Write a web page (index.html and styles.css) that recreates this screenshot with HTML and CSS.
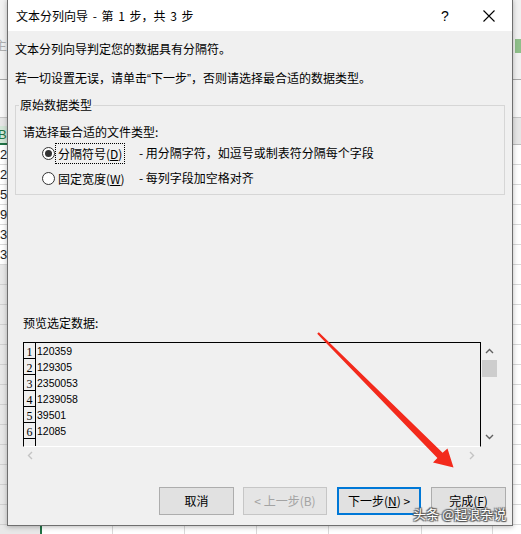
FILE: index.html
```html
<!DOCTYPE html>
<html lang="zh-CN">
<head>
<meta charset="utf-8">
<title>文本分列向导</title>
<link rel="stylesheet" href="styles.css">
</head>
<body>
<div class="desk">
  <div class="sheet">
    <div class="ribbon">
      <span class="ribbon-text">主</span>
      <span class="ribbon-icon"></span>
    </div>
    <div class="fbar"></div>
    <div class="colhead"><span class="colsel">B</span></div>
    <div class="cells">
      <div class="col c0">
        <div class="cell">2</div>
        <div class="cell">2</div>
        <div class="cell">5</div>
        <div class="cell">90</div>
        <div class="cell">3</div>
        <div class="cell">35</div>
        <div class="fill"></div>
      </div>
      <div class="col w71"></div>
      <div class="col w72"></div>
      <div class="col w72"></div>
      <div class="col w72"></div>
      <div class="col w93"></div>
      <div class="col w71"></div>
      <div class="col rest"></div>
    </div>
  </div>

  <div class="dialog">
    <div class="titlebar">
      <span class="title">文本分列向导 - 第 1 步，共 3 步</span>
      <span class="tbtn help">?</span>
      <span class="tbtn close">
        <svg width="12" height="12" viewBox="0 0 12 12"><path d="M0.5 0.5 L11.5 11.5 M11.5 0.5 L0.5 11.5" stroke="#000" stroke-width="1.1" fill="none"/></svg>
      </span>
    </div>
    <div class="content">
      <p class="line first">文本分列向导判定您的数据具有分隔符。</p>
      <p class="line second">若一切设置无误，请单击<span class="q">“</span>下一步<span class="q">”</span>，否则请选择最合适的数据类型。</p>
      <fieldset class="group">
        <legend>原始数据类型</legend>
        <p class="line prompt">请选择最合适的文件类型:</p>
        <div class="radio-row r1">
          <span class="radio checked"></span>
          <span class="rlabel"><span class="focus">分隔符号(<u>D</u>)</span></span>
          <span class="rdesc">- 用分隔字符，如逗号或制表符分隔每个字段</span>
        </div>
        <div class="radio-row r2">
          <span class="radio"></span>
          <span class="rlabel"><span class="nofocus">固定宽度(<u>W</u>)</span></span>
          <span class="rdesc">- 每列字段加空格对齐</span>
        </div>
      </fieldset>
      <p class="line preview-label">预览选定数据:</p>
      <div class="preview">
        <div class="pbox">
          <div class="prow"><span class="pnum">1</span><span class="pval">120359</span></div>
          <div class="prow"><span class="pnum">2</span><span class="pval">129305</span></div>
          <div class="prow"><span class="pnum">3</span><span class="pval">2350053</span></div>
          <div class="prow"><span class="pnum">4</span><span class="pval">1239058</span></div>
          <div class="prow"><span class="pnum">5</span><span class="pval">39501</span></div>
          <div class="prow"><span class="pnum">6</span><span class="pval">12085</span></div>
          <div class="prow"><span class="pnum"></span><span class="pval"></span></div>
        </div>
        <div class="vscroll">
          <svg class="chev" width="9" height="6" viewBox="0 0 9 6"><path d="M1 5 L4.5 1.5 L8 5" stroke="#606060" stroke-width="1.4" fill="none"/></svg>
          <div class="thumb"></div>
          <div class="vspace"></div>
          <svg class="chev" width="9" height="6" viewBox="0 0 9 6"><path d="M1 1 L4.5 4.5 L8 1" stroke="#606060" stroke-width="1.4" fill="none"/></svg>
        </div>
        <div class="hscroll">
          <svg width="6" height="9" viewBox="0 0 6 9"><path d="M5 1 L1.5 4.5 L5 8" stroke="#c4c4c4" stroke-width="1.4" fill="none"/></svg>
          <svg width="6" height="9" viewBox="0 0 6 9"><path d="M1 1 L4.5 4.5 L1 8" stroke="#c4c4c4" stroke-width="1.4" fill="none"/></svg>
        </div>
        <div class="corner"></div>
      </div>
      <div class="buttons">
        <button class="btn b-cancel">取消</button>
        <button class="btn b-prev" disabled>&lt; 上一步(B)</button>
        <button class="btn b-next">下一步(<u>N</u>) &gt;</button>
        <button class="btn b-finish">完成(<u>F</u>)</button>
      </div>
    </div>
  </div>

  <svg class="arrow" width="521" height="534" viewBox="0 0 521 534">
    <polygon points="318.8,332.2 442.6,452.8 447.5,448.5 453.5,467.5 433,462.5 437.4,457.9 317.2,333.8" fill="#f32a1c"/>
  </svg>
  <div class="watermark">头条 @起浪杂说</div>
</div>
</body>
</html>
```

FILE: styles.css
```css
* { box-sizing: border-box; }
html, body { margin: 0; padding: 0; }
body {
  width: 521px;
  height: 534px;
  overflow: hidden;
  font-family: "Noto Sans CJK SC", "Microsoft YaHei", sans-serif;
  font-size: 12px;
  color: #000;
  background: #fff;
}
.desk { position: relative; width: 521px; height: 534px; overflow: hidden; }

/* background spreadsheet */
.sheet { display: flex; flex-direction: column; height: 100%; background: #fff; }
.ribbon {
  height: 80px;
  background: #f1f1f1;
  border-bottom: 1px solid #a8a8a8;
  display: flex;
  justify-content: space-between;
  align-items: flex-start;
  padding-top: 36px;
}
.ribbon-text { margin-left: -6px; color: #b0b0b0; font-size: 13px; line-height: 18px; }
.ribbon-icon { width: 6px; height: 14px; margin-top: 3px; background: #8fbf8a; }
.fbar { height: 38px; background: #f7f7f7; border-bottom: 1px solid #c6c6c6; }
.colhead { height: 27px; background: #e6e6e6; border-bottom: 1px solid #bdbdbd; padding-top: 7px; }
.colsel {
  display: inline-block;
  margin-left: -4px;
  padding: 0 2px;
  background: #d3e7d8;
  color: #217346;
  font-family: "Liberation Sans", sans-serif;
  font-size: 13px;
  line-height: 17px;
  border-bottom: 2px solid #217346;
}
.cells {
  flex: 1;
  display: flex;
  background: repeating-linear-gradient(to bottom, transparent 0 19px, #d9d9d9 19px 20px);
}
.col { border-right: 1px solid #d9d9d9; }
.c0 { width: 42px; border-right: 2px solid #217346; display: flex; flex-direction: column; }
.cell {
  height: 20px;
  line-height: 19px;
  font-family: "Liberation Sans", sans-serif;
  font-size: 13px;
  color: #222;
  background: #fff;
  border-bottom: 1px solid #d9d9d9;
}
.fill { flex: 1; background: repeating-linear-gradient(to bottom, #e8e8e8 0 19px, #d0d0d0 19px 20px); }
.w71 { width: 71px; }
.w72 { width: 72px; }
.w93 { width: 93px; }
.rest { flex: 1; border-right: none; }

/* dialog window */
.dialog {
  position: absolute;
  left: 7px;
  top: -1px;
  width: 506px;
  height: 527px;
  border: 1px solid #6f6f6f;
  background: #f0f0f0;
  display: flex;
  flex-direction: column;
  box-shadow: 0 1px 5px rgba(0, 0, 0, 0.28);
}
.titlebar {
  height: 31px;
  flex: none;
  background: #fff;
  display: flex;
  align-items: center;
  padding-left: 8px;
  padding-right: 1px;
}
.title { flex: 1; line-height: 16px; word-spacing: 2px; }
.tbtn { width: 44px; height: 31px; display: flex; align-items: center; justify-content: center; }
.help { font-family: "Liberation Sans", sans-serif; font-size: 14px; padding-top: 1px; }

.content { flex: 1; display: flex; flex-direction: column; padding: 0 7px; }
.line { margin: 0; line-height: 16px; height: 16px; white-space: nowrap; }
.q { font-family: "Liberation Sans", sans-serif; }
.first { margin-top: 10px; }
.second { margin-top: 13px; }

.group {
  margin: 11px 0 0 0;
  padding: 0 3px 6px 3px;
  border: 1px solid #d6d6d6;
  min-width: 0;
}
.group legend { padding: 0 1px; line-height: 16px; }
.prompt { margin-top: 11px; margin-left: 4px; }
.radio-row { display: flex; align-items: center; height: 20px; margin-left: 23px; }
.r1 { margin-top: 3px; }
.r2 { margin-top: 5px; }
.radio {
  width: 13px;
  height: 13px;
  border-radius: 50%;
  border: 1px solid #333;
  background: #fff;
  display: flex;
  align-items: center;
  justify-content: center;
  flex: none;
}
.radio.checked::after {
  content: "";
  width: 7px;
  height: 7px;
  border-radius: 50%;
  background: #333;
}
.rlabel { width: 83px; margin-left: 1px; flex: none; display: flex; }
.focus { outline: 1px dotted #000; outline-offset: 0; padding: 1px 2px; line-height: 17px; }
.nofocus { padding: 1px 2px; line-height: 17px; }
.rdesc { line-height: 16px; }

.preview-label { margin-top: 120px; margin-left: 8px; }

.preview {
  margin-top: 11px;
  margin-left: 8px;
  width: 474px;
  display: grid;
  grid-template-columns: 458px 16px;
  grid-template-rows: 105px 16px;
}
.pbox {
  border: 1px solid #000;
  border-bottom-color: #fff;
  overflow: hidden;
  display: flex;
  flex-direction: column;
}
.prow { display: flex; height: 16px; flex: none; }
.pnum {
  width: 12px;
  height: 16px;
  border-right: 1px solid #000;
  border-bottom: 1px solid #000;
  font-family: "Liberation Serif", serif;
  font-size: 12px;
  line-height: 17px;
  text-align: center;
  padding-top: 1px;
  flex: none;
}
.pval {
  font-family: "Liberation Sans", sans-serif;
  font-size: 10.5px;
  line-height: 16px;
  padding-left: 1px;
}
.vscroll {
  display: flex;
  flex-direction: column;
  align-items: center;
  padding: 6px 0 7px 1px;
}
.thumb { width: 15px; height: 17px; background: #cdcdcd; margin-top: 6px; }
.vspace { flex: 1; }
.hscroll {
  display: flex;
  justify-content: space-between;
  align-items: center;
  padding: 0 6px 0 4px;
}

.buttons {
  margin-top: 24px;
  margin-right: -1px;
  display: flex;
  justify-content: flex-end;
  gap: 9px;
}
.btn {
  height: 28px;
  border: 1px solid #adadad;
  background: #e1e1e1;
  font-family: "Noto Sans CJK SC", "Microsoft YaHei", sans-serif;
  font-size: 12px;
  color: #000;
  padding: 0;
  line-height: 16px;
}
.b-cancel { width: 75px; }
.b-prev { width: 84px; color: #a3a3a3; border-color: #c6c6c6; background: #e5e5e5; }
.b-next { width: 84px; border: 2px solid #0078d7; margin-left: 1px; }
.b-finish { width: 75px; margin-left: 1px; }

/* overlays */
.arrow { position: absolute; left: 0; top: 0; pointer-events: none; }
.watermark {
  position: absolute;
  left: 413px;
  top: 505px;
  font-size: 13px;
  line-height: 18px;
  color: #fff;
  white-space: nowrap;
  text-shadow: 0 0 1px #444, 1px 1px 1px #555, -1px -1px 1px #666, 1px -1px 1px #666, -1px 1px 1px #666;
}
```
